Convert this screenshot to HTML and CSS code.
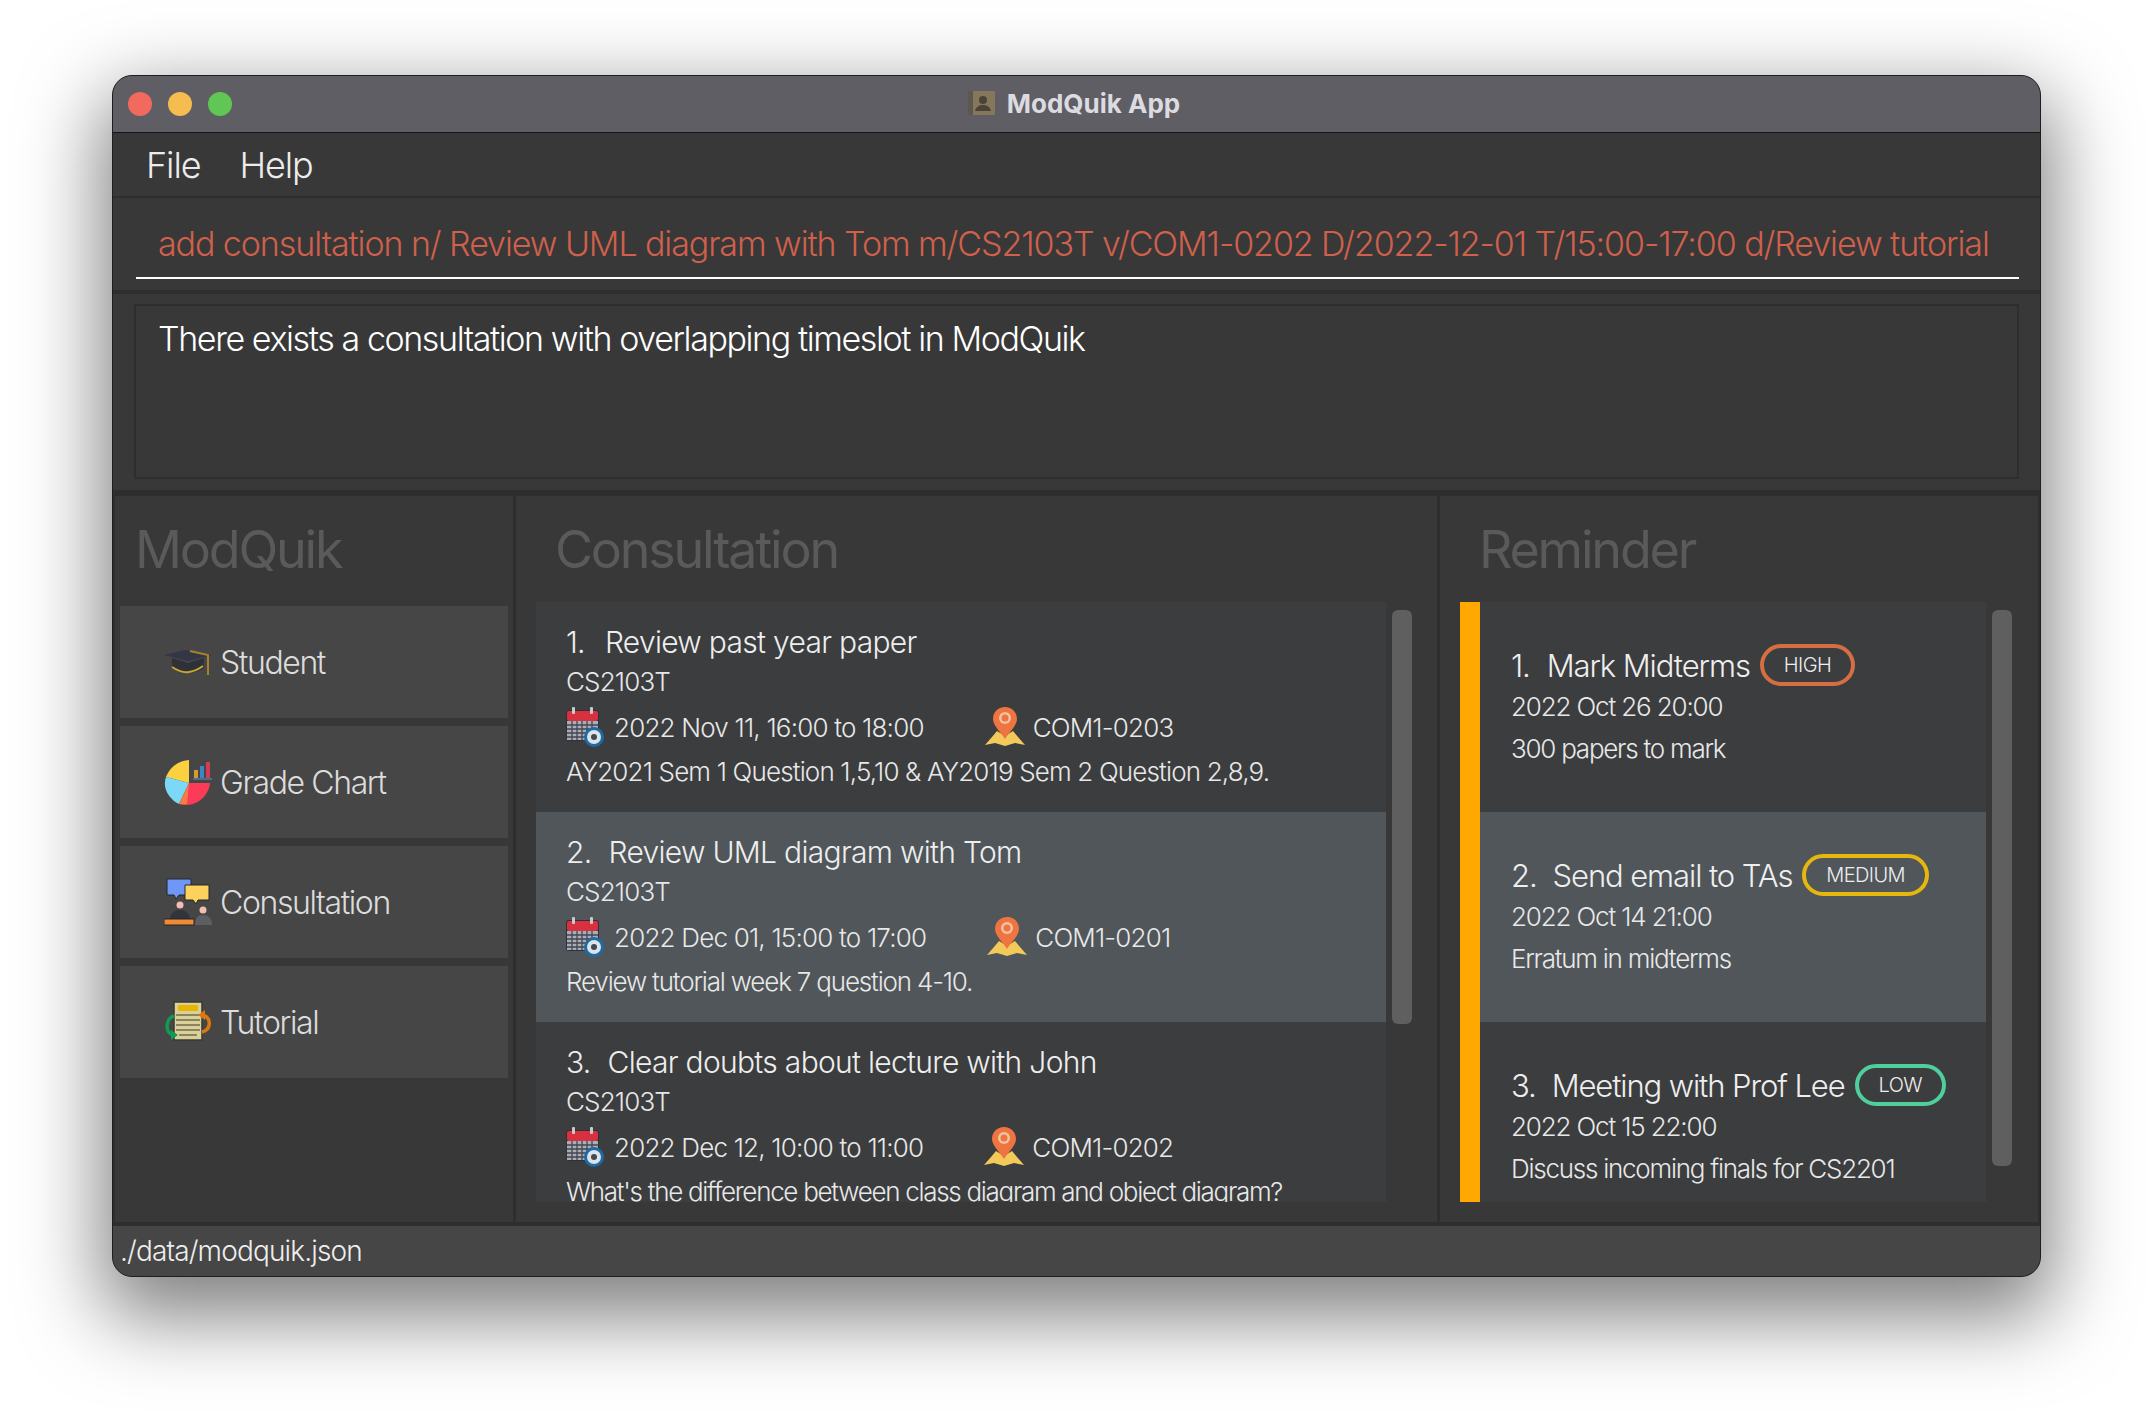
FILE: index.html
```html
<!DOCTYPE html>
<html>
<head>
<title>ModQuik App</title>
<link rel="stylesheet" href="styles.css">
</head>
<body>

<svg class="defs" width="0" height="0">
  <symbol id="cal" viewBox="0 0 38 40">
    <rect x="0" y="3" width="33" height="31" rx="3" fill="#2e3138"/>
    <rect x="1" y="4" width="31" height="10" rx="2" fill="#d8303f"/>
    <rect x="6" y="0" width="3" height="7" rx="1" fill="#c9c9c9"/>
    <rect x="24" y="0" width="3" height="7" rx="1" fill="#c9c9c9"/>
    <rect x="1" y="14" width="31" height="19" fill="#a9adb8"/>
    <path d="M1 18h31M1 22h31M1 26h31M1 30h31M6 14v19M11 14v19M16 14v19M21 14v19M26 14v19" stroke="#44474f" stroke-width="1.3"/>
    <circle cx="28" cy="30" r="10" fill="#1d6ba6"/>
    <circle cx="28" cy="30" r="7" fill="#dde3e8"/>
    <circle cx="28" cy="30" r="3" fill="#3f4a55"/>
  </symbol>
  <symbol id="pin" viewBox="0 0 40 40">
    <path d="M12 24 L20 29 L28 24 L33 30 L40 38 L30 36 L20 39 L10 36 L0 38 L7 30Z" fill="#f3c95a"/>
    <path d="M20 0C13 0 8 5 8 12C8 19 16 25 20 32C24 25 32 19 32 12C32 5 27 0 20 0Z" fill="#ee7440"/>
    <circle cx="20" cy="11" r="6" fill="#f3c2a4"/>
    <circle cx="20" cy="11" r="3.5" fill="#ee7440"/>
  </symbol>
</svg>

<div class="window">

  <div class="titlebar">
    <div class="lights">
      <span class="light red"></span>
      <span class="light yellow"></span>
      <span class="light green"></span>
    </div>
    <div class="wintitle">
      <svg class="appicon" viewBox="0 0 27 24">
        <rect width="27" height="24" rx="1" fill="#85775c"/>
        <rect width="5" height="24" fill="#5c5850"/>
        <circle cx="15" cy="9" r="4" fill="#4a4438"/>
        <path d="M7 20C8 15 12 14 15 14C18 14 22 15 23 20Z" fill="#4a4438"/>
      </svg>
      <span>ModQuik App</span>
    </div>
  </div>

  <div class="menubar">
    <span>File</span>
    <span>Help</span>
  </div>

  <div class="commandbox">
    <div class="commandtext">add consultation n/ Review UML diagram with Tom m/CS2103T v/COM1-0202 D/2022-12-01 T/15:00-17:00 d/Review tutorial</div>
  </div>

  <div class="resultpane">
    <div class="resultbox">There exists a consultation with overlapping timeslot in ModQuik</div>
  </div>

  <div class="main">

    <div class="panel leftpanel">
      <h2 class="heading">ModQuik</h2>
      <div class="navbtn">
        <svg class="navicon" viewBox="0 0 48 48">
          <path d="M0 17L22 12L48 17L24 23Z" fill="#333644"/>
          <path d="M8 20L24 25L40 20V30C33 36 15 36 8 30Z" fill="#2f3138"/>
          <path d="M8 29C14 33 20 35 25 34C31 33 35 31 39 28" fill="none" stroke="#c9a52e" stroke-width="2"/>
          <path d="M26 13L44 17V37" fill="none" stroke="#a9812c" stroke-width="2"/>
        </svg>
        <span>Student</span>
      </div>
      <div class="navbtn">
        <svg class="navicon" viewBox="0 0 48 48">
          <path d="M25 25V2C14 3 6 9 2 19Z" fill="#fbd13f"/>
          <path d="M25 25L2 19C-2 30 5 41 15 46Z" fill="#7bd9f7"/>
          <path d="M25 25L15 46C19 47 22 47 25 46L29 36Z" fill="#fb7b45"/>
          <path d="M25 25H46C45 35 37 46 23 47Z" fill="#fb3b58"/>
          <rect x="30" y="12" width="4" height="8" fill="#d59d2f"/>
          <rect x="36" y="8" width="4" height="12" fill="#3f86c7"/>
          <rect x="42" y="4" width="4" height="16" fill="#d33c52"/>
          <rect x="29" y="20" width="19" height="2" fill="#4f6c8f"/>
        </svg>
        <span>Grade Chart</span>
      </div>
      <div class="navbtn">
        <svg class="navicon" viewBox="0 0 48 48">
          <path d="M3 1H27V17H15L12 21L10 17H3Z" fill="#6e97f8" stroke="#23262c" stroke-width="1"/>
          <path d="M21 7H45V22H34L32 26L29 22H21Z" fill="#fdd25c" stroke="#23262c" stroke-width="1"/>
          <circle cx="16" cy="27" r="3.5" fill="#f3bdb0"/>
          <path d="M6 41C7 34 11 32 16 32C21 32 25 34 26 41Z" fill="#31343a"/>
          <rect x="0" y="41" width="30" height="6" fill="#f08a33" stroke="#23262c" stroke-width="1"/>
          <circle cx="39" cy="32" r="3.5" fill="#f3bdb0"/>
          <path d="M31 47C31 40 34 37 39 37C44 37 48 40 48 47Z" fill="#5c5e62"/>
        </svg>
        <span>Consultation</span>
      </div>
      <div class="navbtn">
        <svg class="navicon" viewBox="0 0 48 48">
          <path d="M10 4H38V42H10Z" fill="#d9d09c" stroke="#3a3a30" stroke-width="1.5"/>
          <rect x="14" y="7" width="20" height="6" fill="#e8b500"/>
          <path d="M12 17H36M12 22H36M12 27H36M12 32H36M15 37H33" stroke="#8b855f" stroke-width="2"/>
          <path d="M10 18C2 20 0 34 9 37" fill="none" stroke="#109a52" stroke-width="3.5"/>
          <path d="M7 32L14 37L7 42Z" fill="#109a52"/>
          <path d="M38 34C47 32 48 20 39 17" fill="none" stroke="#d97a10" stroke-width="3.5"/>
          <path d="M41 12L34 17L41 22Z" fill="#d97a10"/>
        </svg>
        <span>Tutorial</span>
      </div>
    </div>

    <div class="panel midpanel">
      <h2 class="heading">Consultation</h2>
      <div class="listrow">
        <div class="cardlist">
          <div class="ccard">
            <div class="ctitle"><span class="num one">1.</span>Review past year paper</div>
            <div class="cline digits">CS2103T</div>
            <div class="cmeta">
              <svg class="calicon"><use href="#cal"/></svg>
              <span>2022 Nov 11, 16:00 to 18:00</span>
              <svg class="pinicon"><use href="#pin"/></svg>
              <span>COM1-0203</span>
            </div>
            <div class="cline digits">AY2021 Sem 1 Question 1,5,10 &amp; AY2019 Sem 2 Question 2,8,9.</div>
          </div>
          <div class="ccard selected">
            <div class="ctitle"><span class="num">2.</span>Review UML diagram with Tom</div>
            <div class="cline digits">CS2103T</div>
            <div class="cmeta">
              <svg class="calicon"><use href="#cal"/></svg>
              <span>2022 Dec 01, 15:00 to 17:00</span>
              <svg class="pinicon"><use href="#pin"/></svg>
              <span>COM1-0201</span>
            </div>
            <div class="cline">Review tutorial week 7 question 4-10.</div>
          </div>
          <div class="ccard">
            <div class="ctitle"><span class="num">3.</span>Clear doubts about lecture with John</div>
            <div class="cline digits">CS2103T</div>
            <div class="cmeta">
              <svg class="calicon"><use href="#cal"/></svg>
              <span>2022 Dec 12, 10:00 to 11:00</span>
              <svg class="pinicon"><use href="#pin"/></svg>
              <span>COM1-0202</span>
            </div>
            <div class="cline tight">What's the difference between class diagram and object diagram?</div>
          </div>
        </div>
        <div class="thumb longthumb"></div>
      </div>
    </div>

    <div class="panel rightpanel">
      <h2 class="heading">Reminder</h2>
      <div class="listrow">
        <div class="orangebar"></div>
        <div class="cardlist reminders">
          <div class="rcard">
            <div class="rtitle"><span><span class="num one">1.</span>Mark Midterms</span><span class="badge high">HIGH</span></div>
            <div class="rdate">2022 Oct 26 20:00</div>
            <div class="rdesc">300 papers to mark</div>
          </div>
          <div class="rcard selected">
            <div class="rtitle"><span><span class="num">2.</span>Send email to TAs</span><span class="badge medium">MEDIUM</span></div>
            <div class="rdate">2022 Oct 14 21:00</div>
            <div class="rdesc">Erratum in midterms</div>
          </div>
          <div class="rcard">
            <div class="rtitle"><span><span class="num">3.</span>Meeting with Prof Lee</span><span class="badge low">LOW</span></div>
            <div class="rdate">2022 Oct 15 22:00</div>
            <div class="rdesc">Discuss incoming finals for CS2201</div>
          </div>
        </div>
        <div class="thumb shortthumb"></div>
      </div>
    </div>

  </div>

  <div class="statusbar">./data/modquik.json</div>

</div>

</body>
</html>
```

FILE: styles.css
```css
* {
  box-sizing: border-box;
}

body {
  margin: 0;
  height: 1424px;
  padding: 75px 0 0 112px;
  background-color: #fff;
  font-family: Inter, "Liberation Sans", sans-serif;
  overflow: hidden;
}

.defs {
  position: absolute;
}

.window {
  width: 1929px;
  height: 1202px;
  display: flex;
  flex-direction: column;
  border: 1px solid #1e1e1e;
  border-radius: 20px;
  background-color: #383838;
  overflow: hidden;
  box-shadow: 0 30px 80px 10px rgba(0, 0, 0, 0.5);
}

.titlebar {
  height: 57px;
  flex: none;
  display: grid;
  grid-template-columns: 1fr auto 1fr;
  align-items: center;
  background-color: #605e65;
  border-bottom: 1px solid #161616;
}

.lights {
  display: flex;
  gap: 16px;
  padding-left: 15px;
}

.light {
  width: 24px;
  height: 24px;
  border-radius: 50%;
}

.red { background-color: #f26a5e; }
.yellow { background-color: #f5bd4f; }
.green { background-color: #60c654; }

.wintitle {
  display: flex;
  align-items: center;
  gap: 12px;
  margin: 0 5px 2px 0;
  font-size: 26px;
  font-weight: 700;
  color: #dcdbe0;
}

.appicon {
  width: 27px;
  height: 24px;
}

.menubar {
  height: 65px;
  flex: none;
  display: flex;
  align-items: center;
  gap: 39px;
  padding-left: 33px;
  font-size: 36px;
  letter-spacing: -1.1px;
  font-weight: 300;
  color: #ececec;
  border-bottom: 2px solid #2e2e2e;
}

.commandbox {
  height: 96px;
  flex: none;
  padding: 0 21px 0 23px;
  border-bottom: 4px solid #2e2e2e;
}

.commandtext {
  height: 81px;
  padding: 18px 0 0 22px;
  font-size: 34px;
  line-height: 56px;
  letter-spacing: -1.08px;
  font-weight: 300;
  color: #d0604c;
  border-bottom: 2px solid #fff;
  white-space: nowrap;
  overflow: hidden;
}

.resultpane {
  height: 202px;
  flex: none;
  padding: 10px 21px 11px 21px;
  border-bottom: 6px solid #2e2e2e;
}

.resultbox {
  height: 100%;
  padding: 11px 22px;
  border: 2px solid #2e2e2e;
  font-size: 34px;
  line-height: 44px;
  letter-spacing: -1.4px;
  font-weight: 300;
  color: #fff;
}

.main {
  flex: 1;
  display: flex;
  min-height: 0;
  border-left: 2px solid #2e2e2e;
  border-right: 2px solid #2e2e2e;
}

.panel {
  display: flex;
  flex-direction: column;
  flex: none;
}

.leftpanel {
  width: 401px;
  padding: 0 5px;
  border-right: 3px solid #2e2e2e;
}

.midpanel {
  width: 924px;
  padding-left: 20px;
  border-right: 3px solid #2e2e2e;
}

.rightpanel {
  flex: 1;
  padding-left: 20px;
}

.heading {
  height: 106px;
  flex: none;
  margin: 0;
  padding-top: 24px;
  font-size: 52px;
  line-height: 60px;
  font-weight: 400;
  letter-spacing: -2.2px;
  color: #5a5a5a;
}

.leftpanel .heading {
  padding-left: 15px;
  height: 110px;
}

.midpanel .heading {
  padding-left: 19px;
}

.rightpanel .heading {
  padding-left: 19px;
}

.navbtn {
  height: 112px;
  flex: none;
  margin-bottom: 8px;
  display: flex;
  align-items: center;
  gap: 8px;
  padding-left: 44px;
  background-color: #464646;
  font-size: 32px;
  font-weight: 300;
  letter-spacing: -1.4px;
  color: #dcdcdc;
}

.navicon {
  width: 48px;
  height: 48px;
  flex: none;
}

.listrow {
  display: flex;
  align-items: flex-start;
  height: 600px;
}

.cardlist {
  width: 850px;
  height: 600px;
  flex: none;
  overflow: hidden;
  background-color: #3c3d3f;
}

.reminders {
  width: 506px;
}

.ccard {
  height: 210px;
  padding: 21px 0 0 30px;
  color: #e8e8e8;
}

.selected {
  background-color: #50565a;
}

.ctitle {
  height: 41px;
  font-size: 30px;
  line-height: 38px;
  font-weight: 300;
  letter-spacing: -0.7px;
  color: #eee;
}

.num {
  margin-right: 17px;
}

.num.one {
  margin-right: 20px;
}

.rtitle .num {
  margin-right: 16px;
}

.rtitle .num.one {
  margin-right: 17px;
}

.cline {
  height: 36px;
  font-size: 26px;
  line-height: 36px;
  font-weight: 300;
  letter-spacing: -1.18px;
}

.digits {
  letter-spacing: -0.84px;
}

.tight {
  letter-spacing: -1.3px;
}

.cmeta {
  height: 40px;
  margin: 7px 0;
  display: flex;
  align-items: center;
  font-size: 26px;
  font-weight: 300;
  letter-spacing: -0.8px;
}

.calicon {
  width: 38px;
  height: 40px;
  margin-right: 10px;
}

.pinicon {
  width: 40px;
  height: 40px;
  margin: 0 8px 0 61px;
}

.orangebar {
  width: 20px;
  height: 600px;
  flex: none;
  background-color: #ffa800;
}

.rcard {
  height: 210px;
  padding: 42px 0 0 31px;
  color: #e8e8e8;
}

.rtitle {
  height: 42px;
  display: flex;
  align-items: center;
  gap: 10px;
  font-size: 31px;
  font-weight: 300;
  letter-spacing: -1.1px;
  color: #eee;
}

.rdate {
  margin-top: 3px;
  font-size: 26px;
  line-height: 36px;
  font-weight: 300;
  letter-spacing: -1.15px;
}

.rdesc {
  margin-top: 6px;
  font-size: 26px;
  line-height: 36px;
  font-weight: 300;
  letter-spacing: -1.25px;
}

.badge {
  height: 42px;
  display: flex;
  align-items: center;
  padding: 0 20px;
  border: 4px solid;
  border-radius: 21px;
  font-size: 20px;
  letter-spacing: -0.6px;
}

.high { border-color: #d56f43; }
.medium { border-color: #e6b70f; }
.low { border-color: #4ecf9c; }

.thumb {
  width: 20px;
  flex: none;
  margin: 8px 0 0 6px;
  background-color: #5f5f5f;
  border-radius: 6px;
}

.longthumb { height: 414px; }
.shortthumb { height: 556px; }

.statusbar {
  height: 54px;
  flex: none;
  padding-left: 7px;
  border-top: 4px solid #2e2e2e;
  background-color: #464646;
  font-size: 28px;
  line-height: 50px;
  font-weight: 300;
  letter-spacing: -0.85px;
  color: #eee;
}
```
